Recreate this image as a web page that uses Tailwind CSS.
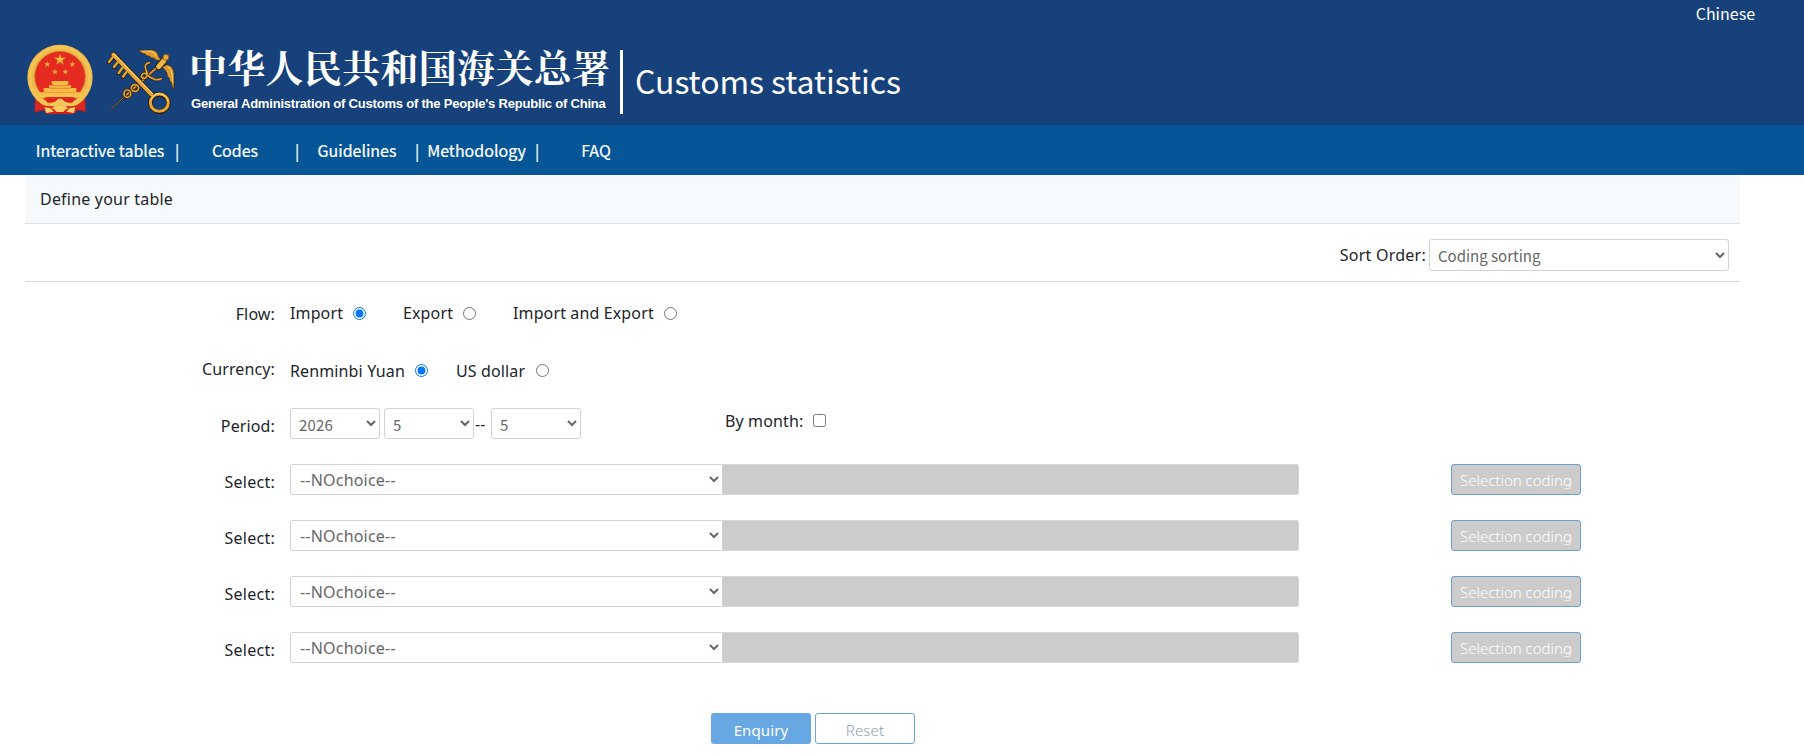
<!DOCTYPE html>
<html lang="en">
  <head>
    <meta charset="UTF-8" />
    <meta name="viewport" content="width=device-width, initial-scale=1.0" />
    <title>Customs statistics</title>
    <script src="https://cdn.jsdelivr.net/npm/@tailwindcss/browser@4"></script>
  </head>
  <body class="h-[756px] overflow-hidden bg-white font-['Noto_Sans','Noto_Sans_CJK_SC',sans-serif] text-base tracking-[0.13px] text-[#212529] whitespace-nowrap">
    <header class="h-[125px] bg-[#17417a] text-white font-['Noto_Sans_CJK_SC',sans-serif] tracking-normal">
      <div class="flex h-7 justify-end pr-[49px]">
        <a href="#" class="text-base leading-[26px]">Chinese</a>
      </div>
      <div class="flex pl-[25px] pt-[14px]">
        <svg class="h-[74px] w-[155px]" viewBox="75 66 465 222">
          <!-- national emblem -->
          <path d="M106 216L104 277L132 271L140 282H222L232 271L257 275L255 216Z" fill="#cf1f1d" />
          <path d="M116 236v36M244 236v36M128 246v22M232 246v22" stroke="#a51214" stroke-width="3" />
          <circle cx="180" cy="172" r="98" fill="#eeb84a" />
          <circle cx="180" cy="172" r="90" fill="none" stroke="#f5c653" stroke-width="8" />
          <circle cx="180" cy="170" r="76" fill="#e52a22" stroke="#c98422" stroke-width="2" />
          <path d="M180 101l4 12h14l-11 8 4 13-11-8-11 8 4-13-11-8h14z" fill="#f5b83d" />
          <path id="star" d="M142 124l2 6h7l-5 4 2 7-6-4-6 4 2-7-5-4h7z" fill="#f5a53a" />
          <use href="#star" x="75" /><use href="#star" x="23" y="22" /><use href="#star" x="54" y="22" />
          <path d="M157 183h46l4 7h-4v5h10v9h16v12h-98v-12h16v-9h10v-5h-4z" fill="#f8bd45" />
          <path d="M151 197h58M147 205h66" stroke="#dd6a2b" stroke-width="2" />
          <path d="M112 217h136l-8 14H120z" fill="#f6c14c" />
          <path d="M128 233q24 2 34 8 18-12 36 0 10-6 34-8l-16 15q-12 1-18-3-18-12-36 0-8 4-18 3z" fill="#d8231f" />
          <path d="M150 252q14 0 20-12 10-9 20 0 6 12 20 12-12 8-30 2-18 6-30-2z" fill="#f5c65c" />
          <path d="M108 246q28 16 56 12l-10 9-50 2zM252 246q-28 16-56 12l10 9 50 2z" fill="#dc2820" />
          <path d="M134 262l16 2 12 11-24 4zM226 262l-16 2-12 11 24 4zM162 268q18-16 36 0l-8 8h-20z" fill="#f8cf67" />
          <g fill="none" stroke-linecap="round" stroke-linejoin="round">
            <!-- caduceus -->
            <path d="M334 267L380 224" stroke="#2c1b09" stroke-width="5" />
            <path d="M334 267L380 224" stroke="#927542" stroke-width="3" />
            <path d="M380 224L489 126" stroke="#2c1b09" stroke-width="10" />
            <path d="M380 224L489 126" stroke="#d9962a" stroke-width="6" />
            <g stroke="#392307" stroke-width="9">
              <ellipse cx="382" cy="221" rx="10" ry="11" />
              <ellipse cx="405" cy="204" rx="11" ry="10" />
              <path d="M448 128q-18 4-10 22 8 14-2 24-8 2-12-4 2-12 12-10 14 14 28 18 10 2 20-2" />
            </g>
            <g stroke="#e1a436" stroke-width="5">
              <ellipse cx="382" cy="221" rx="10" ry="11" />
              <ellipse cx="405" cy="204" rx="11" ry="10" />
              <path d="M448 128q-18 4-10 22 8 14-2 24-8 2-12-4 2-12 12-10 14 14 28 18 10 2 20-2" />
            </g>
            <path d="M415 88Q432 96 454 89Q474 92 476 110L484 121Q470 124 460 114Q452 116 449 108Q438 110 436 102Q424 102 415 88ZM502 134Q520 138 522 160V206Q514 200 515 188Q507 184 508 174Q500 170 501 160Q496 148 486 142Z" fill="#dc9b31" stroke="#392307" stroke-width="2" />
            <path d="M426 94q36-6 42 14M504 140q16 12 14 50" stroke="#ffd36a" stroke-width="3" />
            <path d="M476 140l16-18" stroke="#392307" stroke-width="20" />
            <path d="M476 140l16-18" stroke="#efb84b" stroke-width="15" />
            <circle cx="498" cy="112" r="9" fill="#e9aa3e" stroke="#70430e" stroke-width="2" />
            <!-- key -->
            <g stroke="#2c1b09">
              <path d="M340 104L454 223" stroke-width="16" />
              <path d="M339 112l-13 16M353 128l-11 15M368 144l-13 17M380 157l-12 15" stroke-width="11" />
              <ellipse cx="478" cy="249" rx="27" ry="26" stroke-width="14" />
            </g>
            <g stroke="#e5a73a">
              <path d="M340 104L454 223" stroke-width="12" />
              <path d="M338 112l-11 14M352 128l-10 13M367 144l-11 15M379 157l-10 13" stroke-width="7" />
              <ellipse cx="478" cy="248" rx="27" ry="26" stroke-width="9" />
            </g>
            <path d="M342 102L458 221M454 238q8-19 28-17 17 4 21 22" stroke="#ffe28a" stroke-width="3" />
          </g>
        </svg>
        <div class="ml-[11px] w-[429px]">
          <div class="-ml-[2px] text-[38px] leading-[48px] font-bold tracking-[0.3px] font-['Noto_Serif_CJK_SC','Noto_Sans_CJK_SC',serif]">中华人民共和国海关总署</div>
          <div class="pt-1 text-[13px] leading-[20px] font-bold tracking-[-0.2px] font-['Liberation_Sans',sans-serif]">General Administration of Customs of the People's Republic of China</div>
        </div>
        <div class="mt-2 h-[64px] w-[3px] bg-white"></div>
        <h1 class="ml-3 mt-[14px] text-[32px] leading-[48px] tracking-[-0.05px]">Customs statistics</h1>
      </div>
    </header>

    <nav class="flex h-[50px] items-center bg-[#065596] pl-[25px] text-base tracking-normal text-white font-['Noto_Sans_CJK_SC',sans-serif] [-webkit-text-stroke:0.2px_white]">
      <a href="#" class="w-[150px] text-center">Interactive tables</a>
      <span class="w-[4px] text-center">|</span>
      <a href="#" class="w-[112px] text-center">Codes</a>
      <span class="ml-1 w-[4px] text-center">|</span>
      <a href="#" class="w-[116px] text-center">Guidelines</a>
      <span class="w-[4px] text-center">|</span>
      <a href="#" class="w-[115px] text-center">Methodology</a>
      <span class="ml-px w-[4px] text-center">|</span>
      <a href="#" class="w-[114px] text-center">FAQ</a>
    </nav>

    <main class="ml-[25px] w-[1715px]">
      <div class="h-[49px] border-b border-[#dee2e6] bg-[#f6fafd] pl-[15px] leading-[49px] tracking-[0.2px]">Define your table</div>
      <div class="flex h-[58px] items-center justify-end border-b border-[#d6d9dc] pr-[11px] pt-[5px]">
        <label class="mr-[3px] tracking-[0.25px]">Sort Order:</label>
        <select class="h-8 w-[300px] rounded-[3px] border border-[#ced4da] bg-white pl-1 text-[15px] tracking-normal text-[#666] font-['Noto_Sans_CJK_SC',sans-serif]"><option>Coding sorting</option></select>
      </div>

      <form>
        <div class="flex h-[62px] items-center">
          <label class="mr-[15px] w-[250px] pt-0.5 text-right">Flow:</label>
          <label class="flex items-center"><span class="w-[63px]">Import</span><input type="radio" name="flow" class="size-[13px]" checked /></label>
          <label class="ml-[37px] flex items-center"><span class="w-[60px]">Export</span><input type="radio" name="flow" class="size-[13px]" /></label>
          <label class="ml-[37px] flex items-center"><span class="w-[151px]">Import and Export</span><input type="radio" name="flow" class="size-[13px]" /></label>
        </div>
        <div class="flex h-[53px] items-center">
          <label class="mr-[15px] w-[250px] pb-[3px] text-right">Currency:</label>
          <label class="flex items-center"><span class="w-[125px]">Renminbi Yuan</span><input type="radio" name="currency" class="size-[13px]" checked /></label>
          <label class="ml-[28px] flex items-center"><span class="w-[80px]">US dollar</span><input type="radio" name="currency" class="size-[13px]" /></label>
        </div>
        <div class="mt-[11px] flex h-[31px] items-center">
          <label class="mr-[15px] w-[250px] pt-1 text-right">Period:</label>
          <select class="h-[31px] w-[90px] rounded-[3px] border border-[#ced4da] bg-white pl-1 pt-px text-[15px] tracking-[0.2px] text-[#666] font-['Noto_Sans_CJK_SC',sans-serif]"><option>2026</option></select>
          <select class="ml-1 h-[31px] w-[90px] rounded-[3px] border border-[#ced4da] bg-white pl-1 pt-px text-[15px] text-[#666] font-['Noto_Sans_CJK_SC',sans-serif]"><option>5</option></select>
          <span class="w-[17px] pl-px">--</span>
          <select class="h-[31px] w-[90px] rounded-[3px] border border-[#ced4da] bg-white pl-1 pt-px text-[15px] text-[#666] font-['Noto_Sans_CJK_SC',sans-serif]"><option>5</option></select>
          <label class="ml-[144px] flex items-center pb-[6px]"><span class="w-[88px]">By month:</span><input type="checkbox" class="size-[13px]" /></label>
        </div>
        <div id="selects"></div>
        <div class="mt-[50px] flex gap-1 pl-[686px]">
          <button type="button" class="h-[31px] w-[100px] rounded-[3px] bg-[#67a8e4] pt-[3px] text-[15px] text-white">Enquiry</button>
          <button type="button" class="h-[31px] w-[100px] rounded-[3px] border border-[#6ea2d5] pt-[3px] text-[15px] text-[#8e9bb8] font-light">Reset</button>
        </div>
      </form>
    </main>

    <script>
      // four identical filter rows
      const selects = document.getElementById("selects");
      for (let i = 0; i < 4; i++) {
        selects.innerHTML += `
          <div class="mt-[25px] flex h-[31px] items-center">
            <label class="mr-[15px] w-[250px] pt-1 text-right tracking-[0.25px]">Select:</label>
            <select class="h-[31px] w-[433px] rounded-l-[3px] border border-[#ced4da] bg-white pl-[5px] pt-px tracking-[0.2px] text-[#666]"><option>--NOchoice--</option></select>
            <div class="h-[31px] w-[576px] rounded-r-[3px] border border-l-0 border-[#d3d5d7] bg-[#ccc]"></div>
            <button type="button" class="ml-[152px] h-[31px] w-[130px] rounded-[3px] border border-[#6aa0d0] bg-[#ccc] pt-px text-[15px] font-light tracking-normal text-white">Selection coding</button>
          </div>`;
      }
    </script>
  </body>
</html>
